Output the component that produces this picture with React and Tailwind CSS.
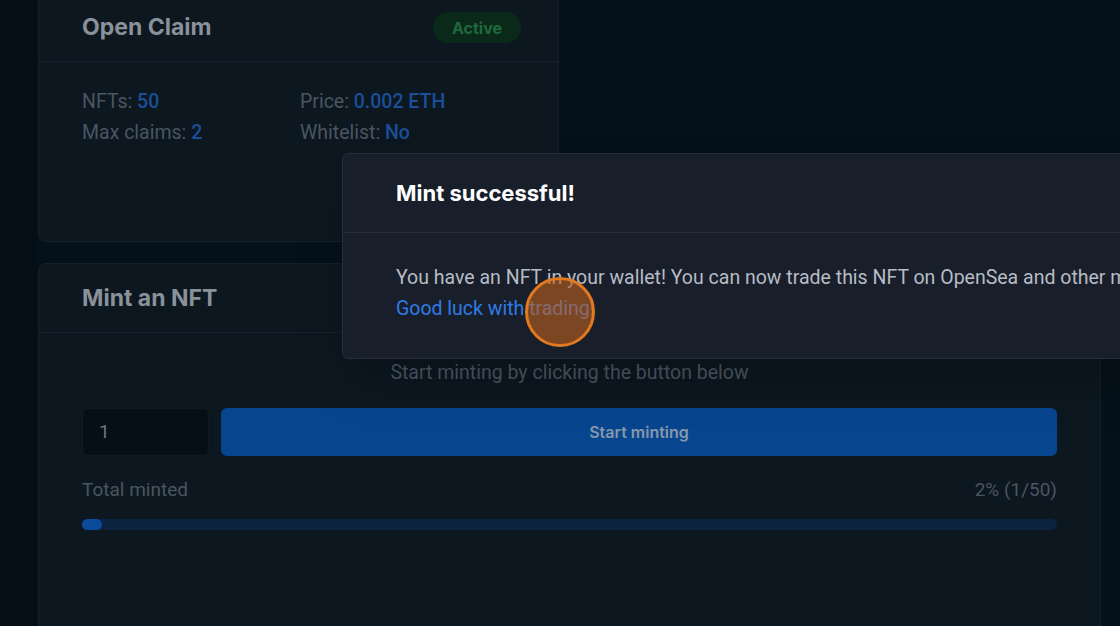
export default function App() {
  return (
    <div
      className="relative flex h-[626px] w-[1120px] overflow-hidden bg-[#05111a]"
      style={{ fontFamily: 'Roboto, "Liberation Sans", sans-serif' }}
    >
      <div className="w-[38px] shrink-0 bg-[#060e15]" />

      <div className="flex flex-col gap-[21px]">
        {/* Open Claim card */}
        <div className="-mt-[7px] h-[249px] w-[521px] shrink-0 rounded-lg border border-[#141f29] bg-[#0c1720]">
          <div className="flex h-[68px] items-center justify-between border-b border-[#16212b] pl-[43px] pr-[37px]">
            <h2 className="text-[23px] font-bold text-[#8a9199]" style={{ fontFamily: 'Inter, sans-serif' }}>
              Open Claim
            </h2>
            <span
              className="flex h-[31px] w-[88px] items-center justify-center rounded-full bg-[#0b2919] text-[16px] font-bold text-[#1f6a3c]"
              style={{ fontFamily: 'Inter, sans-serif' }}
            >
              Active
            </span>
          </div>
          <div className="grid grid-cols-[218px_1fr] pl-[43px] pt-[24px] text-[19.5px] leading-[31px] text-[#4b5561]">
            <div>
              NFTs: <span className="font-medium text-[#1b4f98]">50</span>
            </div>
            <div>
              Price: <span className="font-medium text-[#1b4f98]">0.002 ETH</span>
            </div>
            <div>
              Max claims: <span className="font-medium text-[#1b4f98]">2</span>
            </div>
            <div>
              Whitelist: <span className="font-medium text-[#1b4f98]">No</span>
            </div>
          </div>
        </div>

        {/* Mint card */}
        <div className="h-[400px] w-[1063px] shrink-0 rounded-lg border border-[#141f29] bg-[#0c1720]">
          <div className="flex h-[69px] items-center border-b border-[#16212b] pl-[43px]">
            <h2 className="text-[23px] font-bold text-[#8a9199]" style={{ fontFamily: 'Inter, sans-serif' }}>
              Mint an NFT
            </h2>
          </div>
          <div className="px-[43px]">
            <p className="pt-[28px] text-center text-[19.5px] leading-[24px] text-[#4b5561]">
              Start minting by clicking the button below
            </p>
            <div className="mt-[23px] flex gap-[12px]">
              <div className="flex h-[48px] w-[127px] items-center rounded-md border border-[#0f1a23] bg-[#050f17] px-[16px] text-[19px] text-[#6b7480]">
                1
              </div>
              <button
                className="h-[48px] flex-1 rounded-md bg-[#08458f] text-[16px] font-semibold text-[#8797ab]"
                style={{ fontFamily: 'Inter, sans-serif' }}
              >
                Start minting
              </button>
            </div>
            <div className="mt-[22px] flex justify-between text-[19px] leading-[24px] text-[#4b5561]">
              <span>Total minted</span>
              <span>2% (1/50)</span>
            </div>
            <div className="mt-[17px] h-[11px] w-full rounded-full bg-[#0c2340]">
              <div className="h-full rounded-full bg-[#0b4b9b]" style={{ width: '2%' }} />
            </div>
          </div>
        </div>
      </div>

      {/* Toast */}
      <div className="absolute left-[342px] top-[153px] h-[206px] w-[900px] rounded-md border border-[#252d38] bg-[#181f2a] shadow-2xl">
        <div className="flex h-[79px] items-center border-b border-[#252d38] pl-[53px]">
          <h3 className="text-[22px] font-bold text-white" style={{ fontFamily: 'Inter, sans-serif' }}>
            Mint successful!
          </h3>
        </div>
        <div className="whitespace-nowrap pl-[53px] pt-[29px] text-[19.5px] leading-[31px] text-[#b7bcc4]">
          <p>You have an NFT in your wallet! You can now trade this NFT on OpenSea and other marketplaces.</p>
          <p className="text-[#2f7be6]">Good luck with trading!</p>
        </div>
      </div>

      {/* Cursor highlight */}
      <div className="pointer-events-none absolute left-[525px] top-[277px] h-[70px] w-[70px] rounded-full border-[3px] border-[#e07a1f] bg-[#c2611e]/60" />
    </div>
  )
}
